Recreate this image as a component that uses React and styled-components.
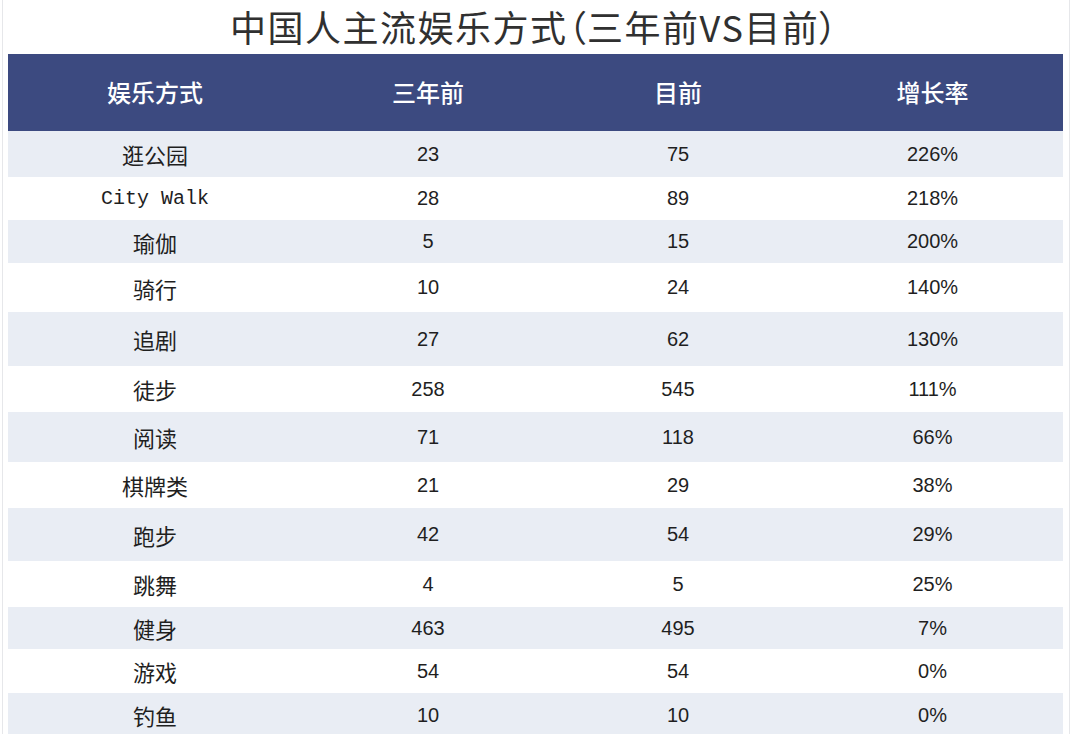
import React from 'react';
import styled, { createGlobalStyle } from 'styled-components';

const GlobalStyle = createGlobalStyle`
  html, body {
    margin: 0;
    padding: 0;
    background: #ffffff;
  }
  body {
    font-family: "Liberation Sans", "Noto Sans CJK SC", sans-serif;
    color: #222;
  }
`;

const Frame = styled.div`
  width: 1068px;
  margin-left: 2px;
  padding: 0 8px 0 5px;
  box-sizing: border-box;
  border-left: 1px solid #e6e7ea;
  border-right: 1px solid #e6e7ea;
  height: 734px;
  overflow: hidden;
`;

const Title = styled.h1`
  margin: 0;
  height: 54px;
  line-height: 52px;
  text-align: center;
  font-family: "Noto Sans CJK SC", sans-serif;
  font-feature-settings: "palt";
  font-size: 36px;
  font-weight: 400;
  color: #303030;
  letter-spacing: 1.5px;
`;

const Table = styled.div`
  width: 1055px;
  display: grid;
  grid-template-columns: 294px 252px 248px 261px;
`;

const HeadCell = styled.div`
  height: 77px;
  background: #3c4a80;
  color: #ffffff;
  display: flex;
  align-items: center;
  justify-content: center;
  font-family: "Noto Sans CJK SC", sans-serif;
  font-size: 24px;
  font-weight: 500;
  padding-bottom: 2px;
  box-sizing: border-box;
`;

const Cell = styled.div`
  height: ${p => p.$h}px;
  background: ${p => (p.$shade ? '#e9edf4' : '#ffffff')};
  display: flex;
  align-items: center;
  justify-content: center;
  font-size: ${p => (p.$cjk ? 22 : 20)}px;
  font-family: ${p =>
    p.$mono
      ? '"Liberation Mono", monospace'
      : p.$cjk
        ? '"Noto Sans CJK SC", sans-serif'
        : '"Liberation Sans", "Noto Sans CJK SC", sans-serif'};
  color: #1f1f1f;
`;

const heads = ['娱乐方式', '三年前', '目前', '增长率'];

const rows = [
  ['逛公园', '23', '75', '226%', 46],
  ['City Walk', '28', '89', '218%', 43],
  ['瑜伽', '5', '15', '200%', 43],
  ['骑行', '10', '24', '140%', 49],
  ['追剧', '27', '62', '130%', 54],
  ['徒步', '258', '545', '111%', 46],
  ['阅读', '71', '118', '66%', 50],
  ['棋牌类', '21', '29', '38%', 46],
  ['跑步', '42', '54', '29%', 53],
  ['跳舞', '4', '5', '25%', 46],
  ['健身', '463', '495', '7%', 42],
  ['游戏', '54', '54', '0%', 44],
  ['钓鱼', '10', '10', '0%', 44],
];

export default function App() {
  return (
    <>
      <GlobalStyle />
      <Frame>
        <Title>中国人主流娱乐方式（三年前VS目前）</Title>
        <Table>
          {heads.map(h => (
            <HeadCell key={h}>{h}</HeadCell>
          ))}
          {rows.map((r, i) => {
            const shade = i % 2 === 0;
            const h = r[4];
            return (
              <React.Fragment key={r[0]}>
                <Cell $h={h} $shade={shade} $cjk={r[0] !== 'City Walk'} $mono={r[0] === 'City Walk'}>
                  {r[0]}
                </Cell>
                <Cell $h={h} $shade={shade}>{r[1]}</Cell>
                <Cell $h={h} $shade={shade}>{r[2]}</Cell>
                <Cell $h={h} $shade={shade}>{r[3]}</Cell>
              </React.Fragment>
            );
          })}
        </Table>
      </Frame>
    </>
  );
}
